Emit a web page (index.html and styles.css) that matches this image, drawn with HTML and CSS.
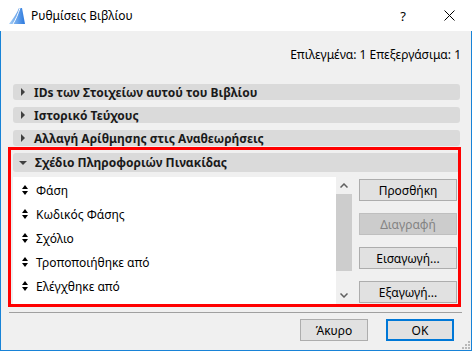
FILE: index.html
```html
<!DOCTYPE html>
<html lang="el">
<head>
  <meta charset="UTF-8">
  <title>Ρυθμίσεις Βιβλίου</title>
  <link rel="stylesheet" href="styles.css">
</head>
<body>
  <div class="dialog">
    <div class="titlebar">
      <svg class="app-icon" width="16" height="16" viewBox="0 0 16 16">
        <defs>
          <linearGradient id="logo" x1="0" x2="1" y1="0" y2="0">
            <stop offset="0" stop-color="#a8d0f7"/>
            <stop offset="1" stop-color="#2a78de"/>
          </linearGradient>
        </defs>
        <path d="M0 16 C4 11 8 5 10 0 L13 0 L16 16 Z" fill="url(#logo)"/>
        <path d="M4 16 C7 11 9 6 11 0" stroke="#fff" stroke-width="1" fill="none"/>
      </svg>
      <span class="title">Ρυθμίσεις Βιβλίου</span>
      <span class="tb-btn help">?</span>
      <span class="tb-btn close">
        <svg width="11" height="11" viewBox="0 0 11 11">
          <path d="M0.5 0.5 L10.5 10.5 M10.5 0.5 L0.5 10.5" stroke="#000" stroke-width="1"/>
        </svg>
      </span>
    </div>

    <div class="body">
      <div class="content">
        <div class="counts">Επιλεγμένα: 1 Επεξεργάσιμα: 1</div>

        <div class="panel-head"><span class="arrow right"></span>IDs των Στοιχείων αυτού του Βιβλίου</div>
        <div class="panel-head"><span class="arrow right"></span>Ιστορικό Τεύχους</div>
        <div class="panel-head"><span class="arrow right"></span>Αλλαγή Αρίθμησης στις Αναθεωρήσεις</div>

        <div class="panel open">
          <div class="panel-head big"><span class="arrow down"></span>Σχέδιο Πληροφοριών Πινακίδας</div>
          <div class="panel-body">
            <div class="listbox">
              <ul class="fields">
                <li><span class="sort"></span>Φάση</li>
                <li><span class="sort"></span>Κωδικός Φάσης</li>
                <li><span class="sort"></span>Σχόλιο</li>
                <li><span class="sort"></span>Τροποποιήθηκε από</li>
                <li><span class="sort"></span>Ελέγχθηκε από</li>
              </ul>
              <div class="scrollbar">
                <div class="sb-arrow">
                  <svg width="8" height="5" viewBox="0 0 8 5"><path d="M0.5 4.5 L4 1 L7.5 4.5" stroke="#606060" stroke-width="1.5" fill="none"/></svg>
                </div>
                <div class="sb-thumb"></div>
                <div class="sb-space"></div>
                <div class="sb-arrow">
                  <svg width="8" height="5" viewBox="0 0 8 5"><path d="M0.5 0.5 L4 4 L7.5 0.5" stroke="#606060" stroke-width="1.5" fill="none"/></svg>
                </div>
              </div>
            </div>
            <div class="actions">
              <button>Προσθήκη</button>
              <button disabled>Διαγραφή</button>
              <button>Εισαγωγή...</button>
              <button>Εξαγωγή...</button>
            </div>
          </div>
        </div>
      </div>

      <div class="footer">
        <div class="separator"></div>
        <div class="footer-buttons">
          <button>Άκυρο</button>
          <button class="default">OK</button>
        </div>
      </div>

      <svg class="grip" width="8" height="8" viewBox="0 0 8 8">
        <rect x="6" y="0" width="2" height="2" fill="#b8b8b8"/>
        <rect x="3" y="3" width="2" height="2" fill="#b8b8b8"/>
        <rect x="6" y="3" width="2" height="2" fill="#b8b8b8"/>
        <rect x="0" y="6" width="2" height="2" fill="#b8b8b8"/>
        <rect x="3" y="6" width="2" height="2" fill="#b8b8b8"/>
        <rect x="6" y="6" width="2" height="2" fill="#b8b8b8"/>
      </svg>
    </div>

    <!-- κόκκινο πλαίσιο επισήμανσης -->
    <div class="highlight"></div>
  </div>
</body>
</html>
```

FILE: styles.css
```css
* {
  box-sizing: border-box;
}

body {
  margin: 0;
  font-family: 'Noto Sans', 'Open Sans', sans-serif;
  font-size: 12px;
  color: #000;
  background: #f0f0f0;
}

.dialog {
  position: relative;
  width: 472px;
  height: 351px;
  display: flex;
  flex-direction: column;
}

/* γραμμή τίτλου */
.titlebar {
  height: 31px;
  background: #fff;
  display: flex;
  align-items: center;
  padding-left: 9px;
}

.app-icon {
  display: block;
  margin-top: 1px;
}

.title {
  margin-left: 6px;
  font-size: 12px;
}

.tb-btn {
  width: 46px;
  height: 31px;
  display: flex;
  align-items: center;
  justify-content: center;
}

.help {
  margin-left: auto;
  font-size: 13px;
}

.close svg {
  display: block;
  margin-left: 1px;
}

.body {
  position: relative;
  flex: 1;
  display: flex;
  flex-direction: column;
  background: #f0f0f0;
  border: 1px solid #1883d7;
  border-top: none;
}

.content {
  flex: 1;
  padding: 16px 11px 0 12px;
}

.counts {
  text-align: right;
  line-height: 16px;
  margin-right: -1px;
  margin-bottom: 21px;
}

.panel-head {
  height: 16px;
  margin-bottom: 7px;
  background: #dadada;
  border-radius: 3px;
  display: flex;
  align-items: center;
  padding-left: 8px;
  font-weight: bold;
  color: #1a1a1a;
}

.panel-head.big {
  height: 19px;
  margin-bottom: 0;
  padding-left: 6px;
}

.arrow {
  width: 0;
  height: 0;
  margin-right: 9px;
}

.arrow.right {
  border-top: 4px solid transparent;
  border-bottom: 4px solid transparent;
  border-left: 4px solid #404040;
}

.arrow.down {
  border-left: 4px solid transparent;
  border-right: 4px solid transparent;
  border-top: 4px solid #404040;
  margin-right: 8px;
}

.panel-body {
  display: flex;
  padding-top: 5px;
}

.listbox {
  width: 339px;
  height: 127px;
  display: flex;
  background: #fff;
}

.fields {
  list-style: none;
  margin: 0;
  padding: 1px 0 0 0;
  flex: 1;
}

.fields li {
  height: 24px;
  display: flex;
  align-items: center;
  padding-left: 9px;
}

.sort {
  width: 6px;
  height: 10px;
  margin-right: 8px;
  position: relative;
}

.sort::before,
.sort::after {
  content: '';
  position: absolute;
  left: 0;
  border-left: 3px solid transparent;
  border-right: 3px solid transparent;
}

.sort::before {
  top: 0;
  border-bottom: 4px solid #000;
}

.sort::after {
  bottom: 0;
  border-top: 4px solid #000;
}

.scrollbar {
  width: 16px;
  background: #f0f0f0;
  display: flex;
  flex-direction: column;
}

.sb-arrow {
  height: 17px;
  display: flex;
  align-items: center;
  justify-content: center;
}

.sb-thumb {
  height: 77px;
  background: #cdcdcd;
}

.sb-space {
  flex: 1;
}

.actions {
  margin-left: 7px;
  padding-top: 2px;
  display: flex;
  flex-direction: column;
  gap: 12px;
}

button {
  font-family: inherit;
  font-size: 12px;
  color: #000;
  background: #e1e1e1;
  border: 1px solid #adadad;
  height: 22px;
  padding: 0;
  margin: 0;
}

.actions button {
  width: 98px;
}

button:disabled {
  background: #cccccc;
  border-color: #bfbfbf;
  color: #838383;
}

.footer {
  height: 38px;
}

.separator {
  height: 1px;
  margin: 0 9px 0 8px;
  background: #a0a0a0;
}

.footer-buttons {
  display: flex;
  justify-content: flex-end;
  gap: 18px;
  padding: 6px 17px 0 0;
}

.footer-buttons button {
  width: 68px;
}

button.default {
  border: 2px solid #0078d7;
}

.grip {
  position: absolute;
  right: 1px;
  bottom: 1px;
}

.highlight {
  position: absolute;
  left: 8px;
  top: 147px;
  width: 453px;
  height: 160px;
  border: 3px solid #ff0000;
  pointer-events: none;
}
```
